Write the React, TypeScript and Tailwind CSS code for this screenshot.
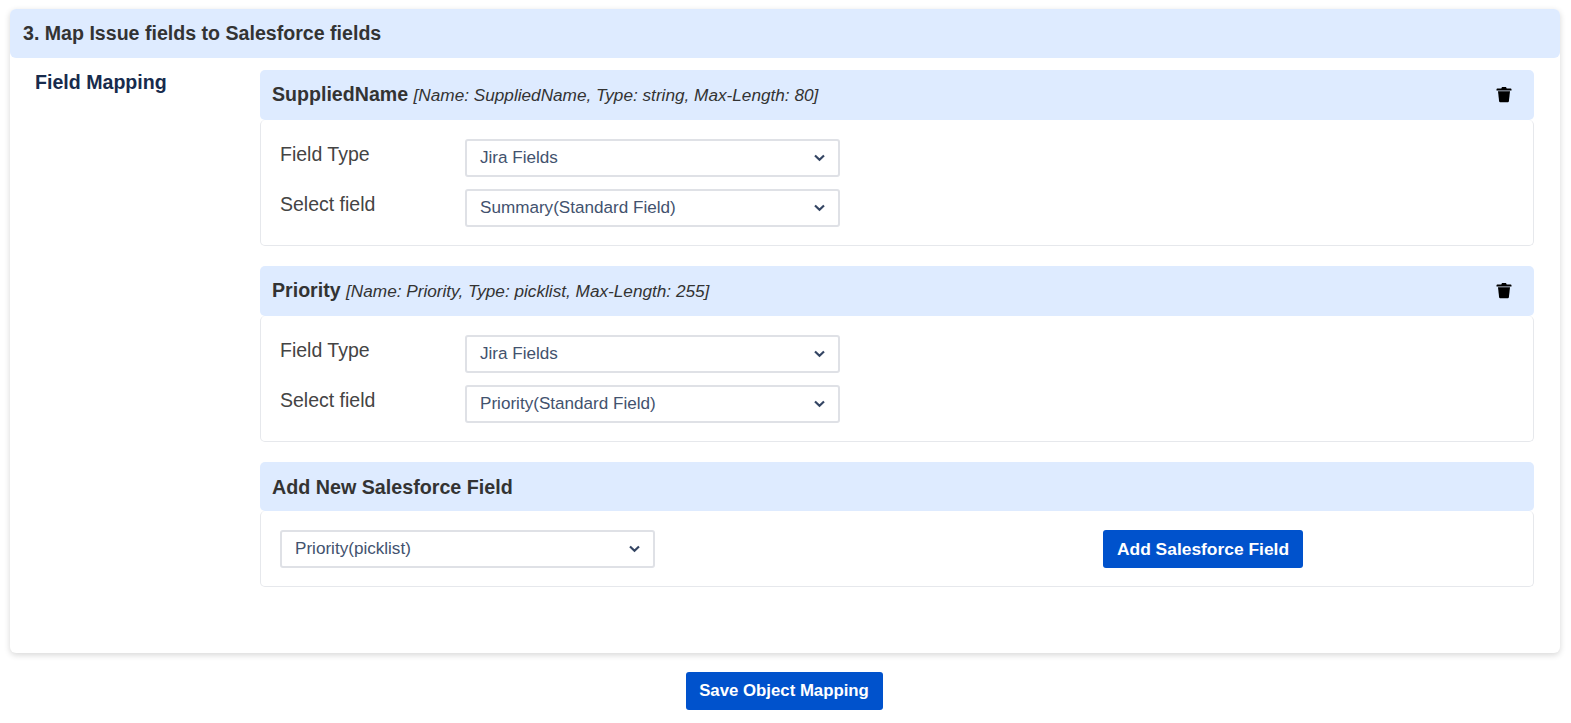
const font = "font-['Liberation_Sans',Arial,sans-serif]";

// Native-looking select drawn as a box with a chevron
function SelectBox({ value }: { value: string }) {
  return (
    <div className="flex h-[38px] w-[375px] items-center justify-between rounded-[3px] border-2 border-[#dfe1e6] bg-white pl-[13px] pr-[13px] text-[17.1px] text-[#42526e]">
      <span>{value}</span>
      <svg width="11" height="8" viewBox="0 0 11 8" fill="none">
        <path d="M1 1.5L5.5 5.7L10 1.5" stroke="#344563" strokeWidth="2.2" />
      </svg>
    </div>
  );
}

function TrashIcon() {
  return (
    <svg className="-mt-[2px]" width="16" height="17" viewBox="0 0 16 17" fill="#000">
      <path d="M0.5 3.4C0.5 2.8 1 2.6 1.6 2.6H5.3L6 1H10L10.7 2.6H14.4C15 2.6 15.5 2.8 15.5 3.4V4.4H0.5V3.4Z" />
      <path d="M2 5.2H14L12.9 15.2C12.8 15.9 12.4 16.2 11.8 16.2H4.2C3.6 16.2 3.2 15.9 3.1 15.2L2 5.2Z" />
    </svg>
  );
}

function FieldCard({
  name,
  meta,
  selected,
}: {
  name: string;
  meta: string;
  selected: string;
}) {
  return (
    <div className="mb-[20px]">
      <div className="flex h-[50px] items-center justify-between rounded-[5px] bg-[#deebff] pl-3 pr-[22px]">
        <div className="text-[#333]">
          <span className="text-[19.6px] font-bold">{name}</span>{" "}
          <span className="ml-[1px] text-[17.2px] italic">{meta}</span>
        </div>
        <TrashIcon />
      </div>
      <div className="h-[126px] rounded-[5px] border border-t-0 border-[#e6e8ec] pl-[19px] pt-[19px]">
        <div className="flex h-[38px]">
          <div className="w-[185px] pt-[2px] text-[19.5px] leading-[27px] text-[#444]">
            Field Type
          </div>
          <SelectBox value="Jira Fields" />
        </div>
        <div className="mt-3 flex h-[38px]">
          <div className="w-[185px] pt-[2px] text-[19.5px] leading-[27px] text-[#444]">
            Select field
          </div>
          <SelectBox value={selected} />
        </div>
      </div>
    </div>
  );
}

export default function App() {
  return (
    <div className={`${font} h-[723px] w-[1571px] overflow-hidden bg-white px-[10px] pt-[9px]`}>
      <div className="w-[1550px] rounded-[6px] bg-white shadow-[0_2px_6px_rgba(0,0,0,0.16)]">
        {/* Section title */}
        <div className="flex h-[49px] items-center rounded-[6px] bg-[#deebff] px-[13px] text-[19.6px] font-bold text-[#333]">
          3. Map Issue fields to Salesforce fields
        </div>

        <div className="flex h-[595px] pt-3">
          <div className="w-[250px] pl-[25px] text-[19.6px] font-bold leading-[24px] text-[#172b4d]">
            Field Mapping
          </div>

          <div className="w-[1274px]">
            <FieldCard
              name="SuppliedName"
              meta="[Name: SuppliedName, Type: string, Max-Length: 80]"
              selected="Summary(Standard Field)"
            />
            <FieldCard
              name="Priority"
              meta="[Name: Priority, Type: picklist, Max-Length: 255]"
              selected="Priority(Standard Field)"
            />

            {/* Add new field */}
            <div className="flex h-[49px] items-center rounded-[5px] bg-[#deebff] pl-3 pt-[2px] text-[19.7px] font-bold text-[#333]">
              Add New Salesforce Field
            </div>
            <div className="flex h-[76px] items-start rounded-[5px] border border-t-0 border-[#e6e8ec] pl-[19px] pt-[19px]">
              <SelectBox value="Priority(picklist)" />
              <button className="ml-[448px] h-[38px] w-[200px] rounded-[3px] bg-[#0052cc] text-[17.4px] font-bold text-white">
                Add Salesforce Field
              </button>
            </div>
          </div>
        </div>
      </div>

      <div className="mt-[19px] flex justify-center pr-[3px]">
        <button className="h-[38px] w-[197px] rounded-[3px] bg-[#0052cc] text-[16.8px] font-bold text-white">
          Save Object Mapping
        </button>
      </div>
    </div>
  );
}
